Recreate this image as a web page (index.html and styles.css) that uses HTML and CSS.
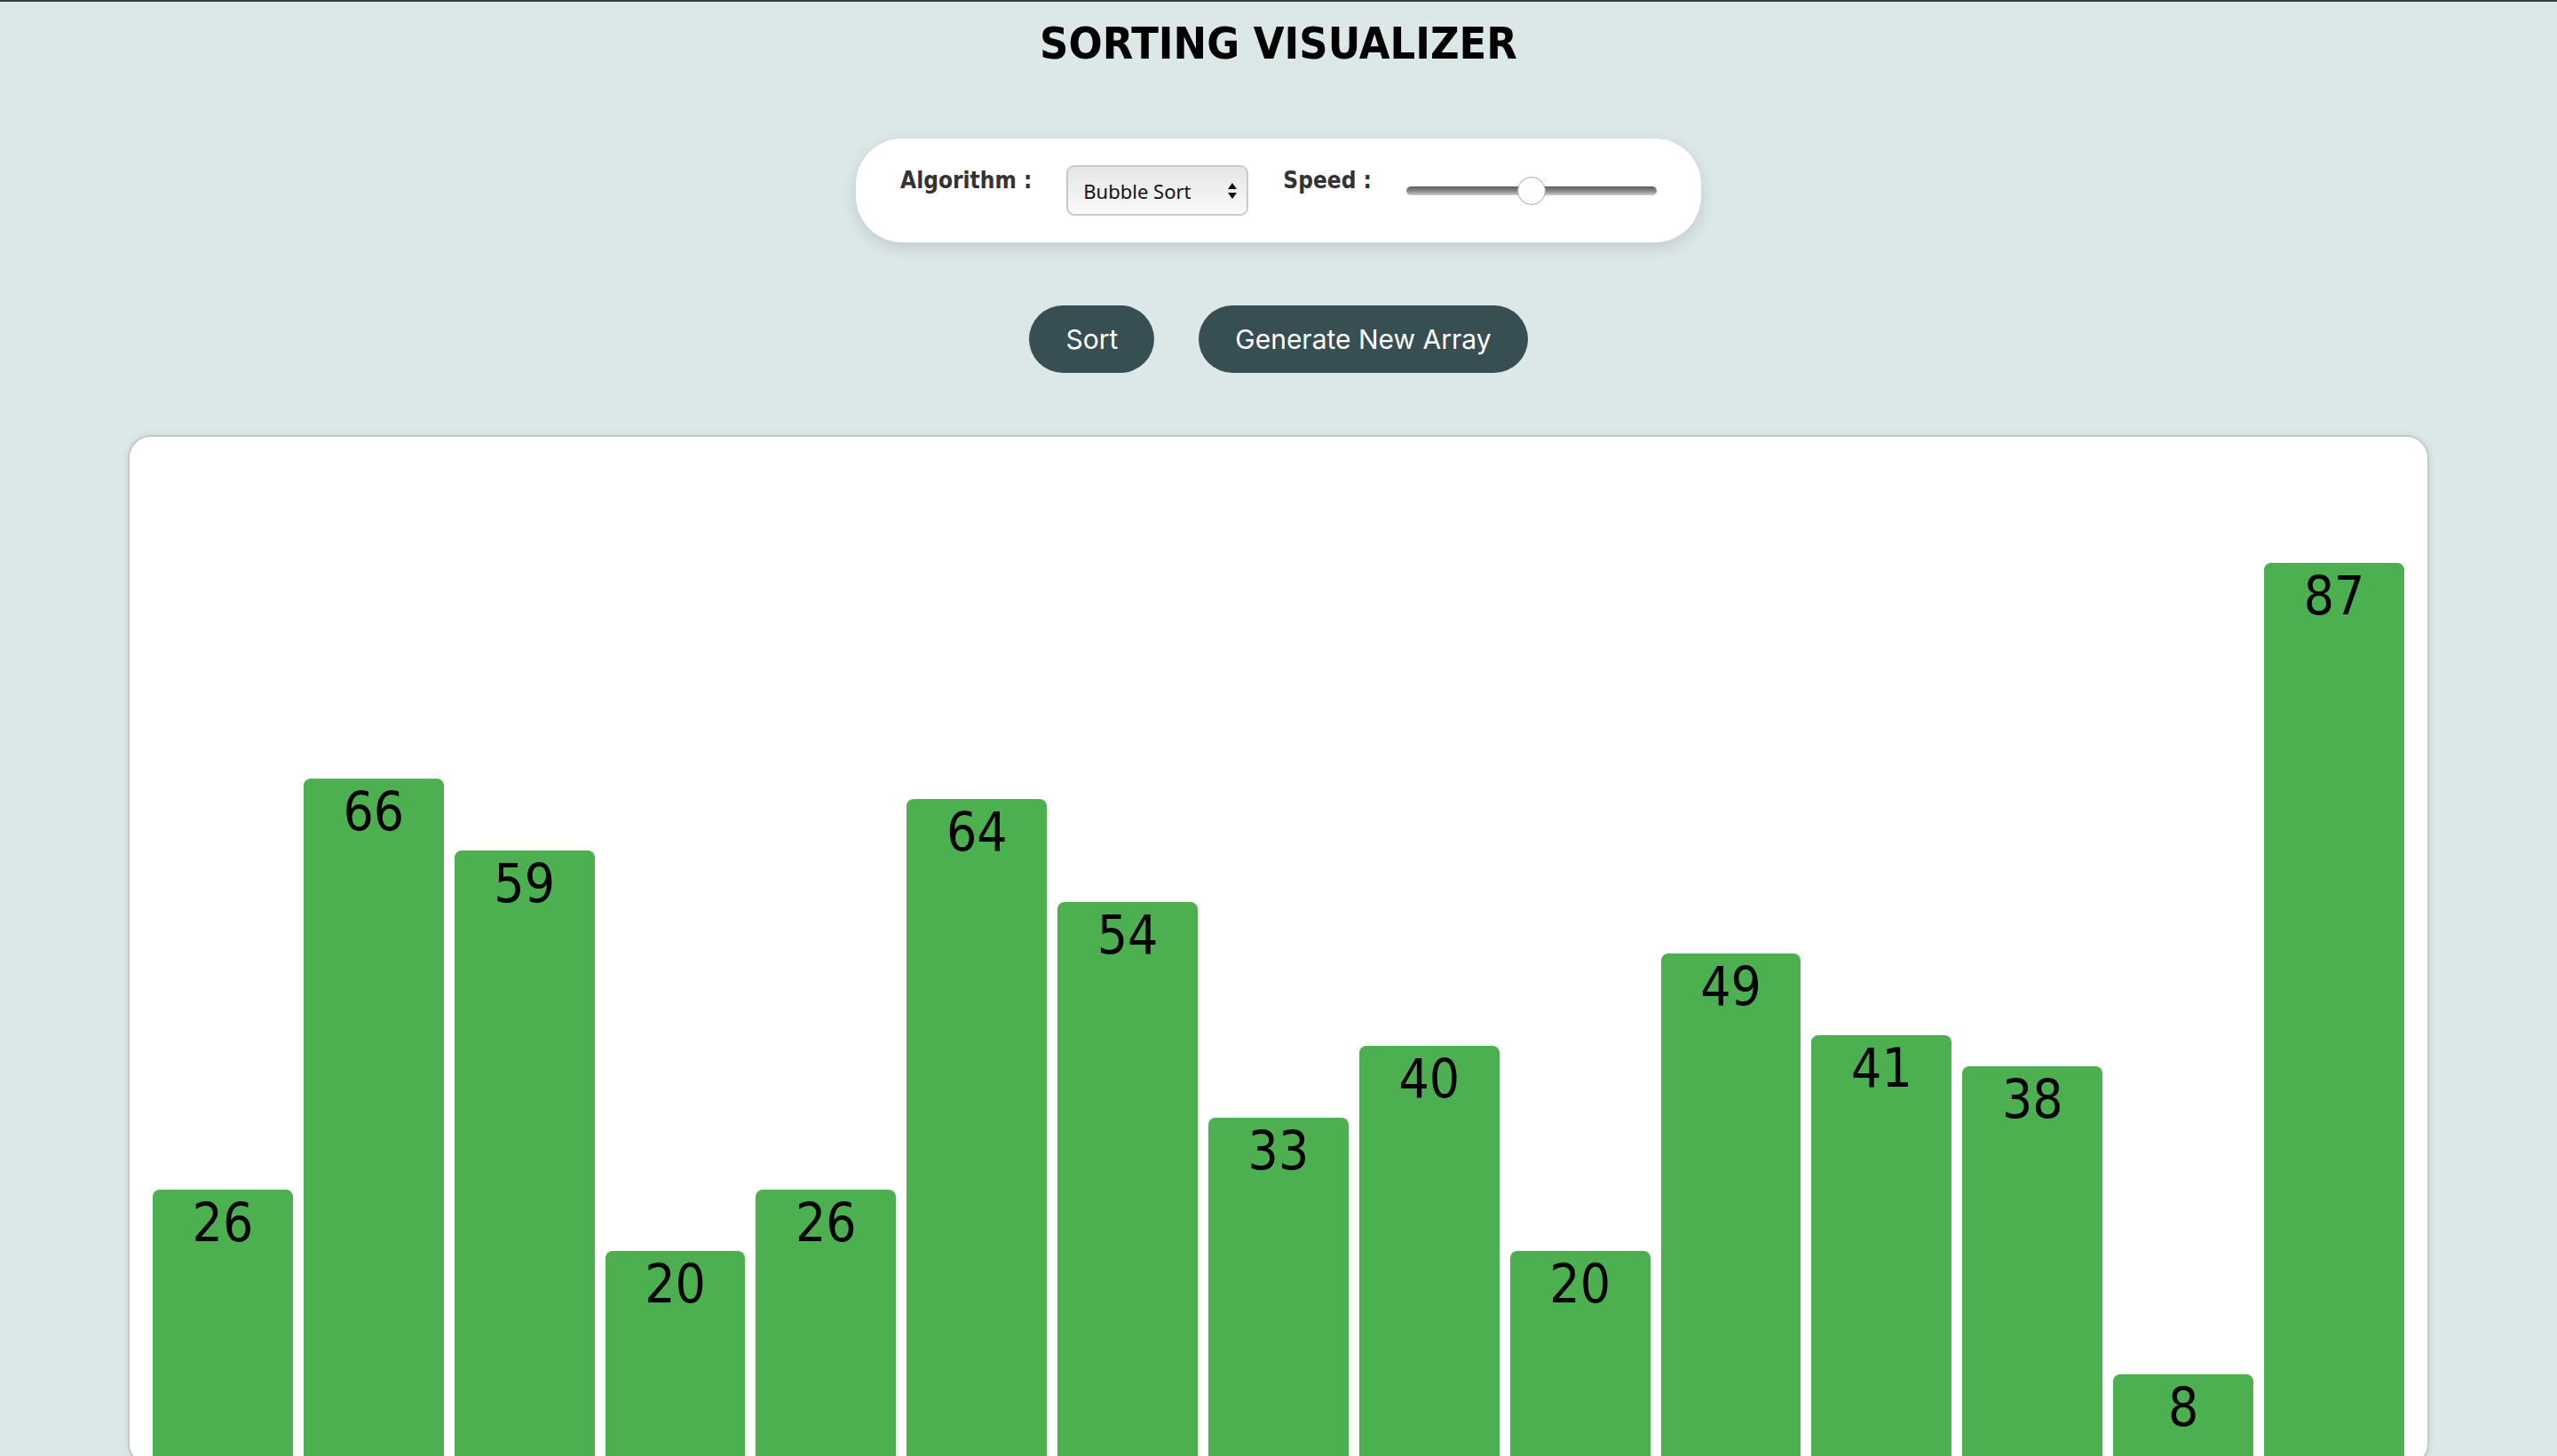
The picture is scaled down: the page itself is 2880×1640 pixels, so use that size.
FILE: index.html
```html
<!DOCTYPE html>
<html lang="en">
<head>
<meta charset="utf-8">
<title>Sorting Visualizer</title>
<link rel="stylesheet" href="styles.css">
</head>
<body>
<h1 class="title">SORTING VISUALIZER</h1>

<div class="controls">
  <label class="ctl-label" for="algo">Algorithm :</label>
  <div class="select-wrap">
    <select id="algo" class="algo">
      <option>Bubble Sort</option>
      <option>Selection Sort</option>
      <option>Insertion Sort</option>
      <option>Merge Sort</option>
      <option>Quick Sort</option>
    </select>
    <svg class="select-arrows" width="10" height="18" viewBox="0 0 10 18" aria-hidden="true">
      <path d="M5 0 L10 7 L0 7 Z" fill="#111"/>
      <path d="M0 11 L10 11 L5 18 Z" fill="#111"/>
    </svg>
  </div>
  <label class="ctl-label" for="speed">Speed :</label>
  <input id="speed" class="speed" type="range" min="0" max="100" value="50">
</div>

<div class="actions">
  <button class="btn">Sort</button>
  <button class="btn">Generate New Array</button>
</div>

<div class="chart">
  <div class="bar" style="height:301px"><span class="bar-val">26</span></div>
  <div class="bar" style="height:764px"><span class="bar-val">66</span></div>
  <div class="bar" style="height:683px"><span class="bar-val">59</span></div>
  <div class="bar" style="height:232px"><span class="bar-val">20</span></div>
  <div class="bar" style="height:301px"><span class="bar-val">26</span></div>
  <div class="bar" style="height:741px"><span class="bar-val">64</span></div>
  <div class="bar" style="height:625px"><span class="bar-val">54</span></div>
  <div class="bar" style="height:382px"><span class="bar-val">33</span></div>
  <div class="bar" style="height:463px"><span class="bar-val">40</span></div>
  <div class="bar" style="height:232px"><span class="bar-val">20</span></div>
  <div class="bar" style="height:567px"><span class="bar-val">49</span></div>
  <div class="bar" style="height:475px"><span class="bar-val">41</span></div>
  <div class="bar" style="height:440px"><span class="bar-val">38</span></div>
  <div class="bar" style="height:93px"><span class="bar-val">8</span></div>
  <div class="bar" style="height:1007px"><span class="bar-val">87</span></div>
</div>
</body>
</html>
```
FILE: styles.css
```css
html {
  border-top: 2px solid #3a3d3d;
  background: #dce7e7;
}

body {
  margin: 0;
  background: #dce7e7;
  font-family: "DejaVu Sans Condensed", "DejaVu Sans", sans-serif;
  font-stretch: condensed;
  color: #000;
}

.title {
  margin: 22px 0 0;
  font-size: 50px;
  line-height: 1;
  font-weight: bold;
  text-align: center;
  color: #000;
}

.controls {
  display: flex;
  align-items: center;
  gap: 39px;
  width: fit-content;
  height: 117px;
  box-sizing: border-box;
  margin: 82px auto 0;
  padding: 0 50px;
  background: #fff;
  border-radius: 52px;
  box-shadow: 0 6px 18px rgba(0, 0, 0, 0.12);
}

.ctl-label {
  margin-bottom: 24px;
  font-size: 26px;
  font-weight: bold;
  color: #333;
}

.select-wrap {
  position: relative;
  width: 205px;
  height: 57px;
}

.algo {
  -webkit-appearance: none;
  appearance: none;
  width: 100%;
  height: 100%;
  margin: 0;
  padding: 0 30px 0 17px;
  box-sizing: border-box;
  border: 2px solid #cacaca;
  border-radius: 9px;
  background: linear-gradient(to bottom, #e6e6e6, #f9f9f9);
  font-family: "Noto Sans", sans-serif;
  font-size: 22px;
  color: #111;
  outline: none;
}

.select-arrows {
  position: absolute;
  right: 13px;
  top: 20px;
  pointer-events: none;
}

.speed {
  -webkit-appearance: none;
  appearance: none;
  width: 282px;
  height: 32px;
  margin: 0;
  background: transparent;
}

.speed::-webkit-slider-runnable-track {
  height: 10px;
  border-radius: 5px;
  background: linear-gradient(to bottom, #5c5c5c, #8c8c8c 55%, #cfcfcf);
}

.speed::-webkit-slider-thumb {
  -webkit-appearance: none;
  appearance: none;
  width: 32px;
  height: 32px;
  margin-top: -11px;
  box-sizing: border-box;
  border-radius: 50%;
  background: #fff;
  border: 1px solid #a9a9a9;
}

.actions {
  display: flex;
  justify-content: center;
  gap: 50px;
  margin-top: 71px;
}

.btn {
  height: 76px;
  padding: 0 41px;
  border: none;
  border-radius: 38px;
  background: #374f52;
  color: #fff;
  font-family: Inter, Roboto, sans-serif;
  font-size: 30px;
  cursor: pointer;
}

.chart {
  display: flex;
  align-items: flex-end;
  gap: 12px;
  width: 90%;
  height: 1162px;
  box-sizing: border-box;
  margin: 70px auto 0;
  padding: 0 26px 9px;
  background: #fff;
  border: 2px solid #c6c9c9;
  border-radius: 26px;
  box-shadow: 0 0 8px rgba(0, 0, 0, 0.08);
}

.bar {
  flex: 1;
  background: #4caf50;
  border-radius: 8px 8px 0 0;
  text-align: center;
}

.bar-val {
  display: block;
  padding-top: 7px;
  font-size: 60px;
  line-height: 1;
  color: #000;
}
```
